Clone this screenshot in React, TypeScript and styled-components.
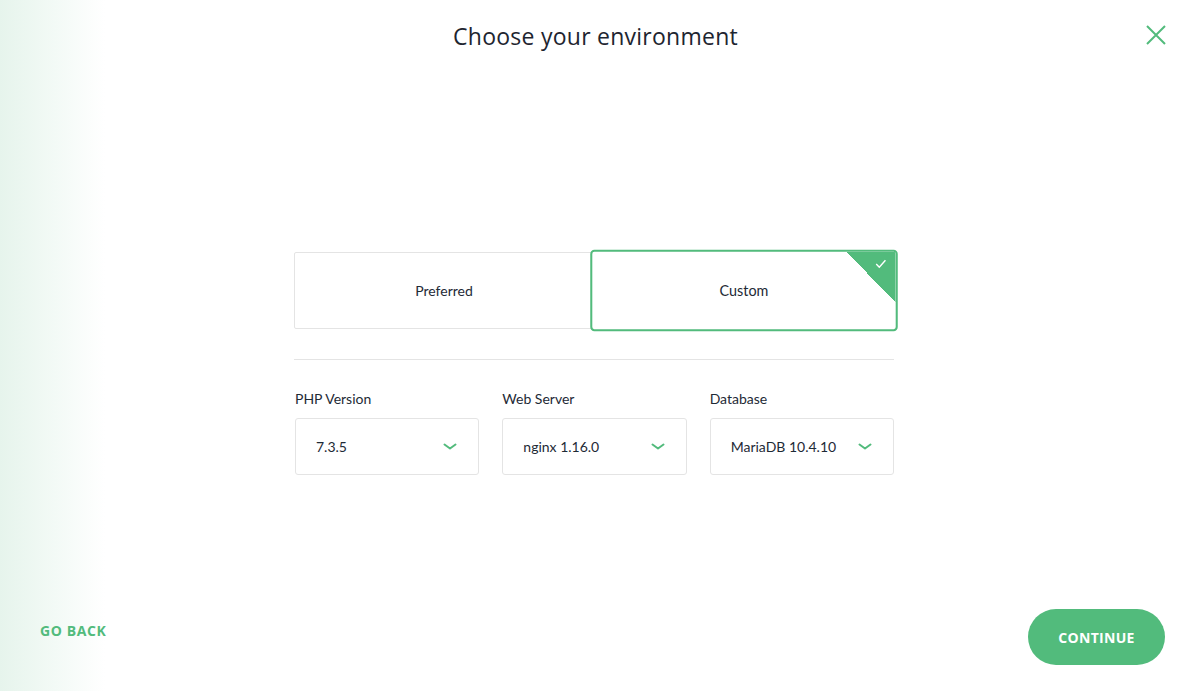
import React, { useState } from "react";
import styled, { createGlobalStyle } from "styled-components";

const GREEN = "#52bb7c";

const Global = createGlobalStyle`
  html, body { margin: 0; padding: 0; height: 100%; }
  body { font-family: Lato, "Open Sans", sans-serif; color: #1e2a36; background: #fff; }
  #root { height: 100%; }
  * { box-sizing: border-box; }
`;

const Page = styled.div`
  position: relative;
  height: 691px;
  display: grid;
  grid-template-rows: auto 1fr auto;
  background: linear-gradient(to right, #e6f4ec 0px, #f3faf6 55px, #ffffff 105px);
`;

const Header = styled.header`
  height: 72px;
  display: flex;
  align-items: center;
  justify-content: center;
  padding-left: 0;
`;

const Title = styled.h1`
  margin: 0;
  font-family: "Open Sans", sans-serif;
  font-weight: 400;
  font-size: 23px;
  letter-spacing: 0.25px;
  color: #1e2530;
`;

const CloseButton = styled.button`
  position: absolute;
  top: 24px;
  right: 24px;
  width: 22px;
  height: 22px;
  padding: 0;
  border: 0;
  background: none;
  cursor: pointer;
  display: flex;
`;

const Main = styled.main`
  padding-top: 180px;
  padding-right: 3px;
  display: flex;
  justify-content: center;
`;

const Content = styled.div`
  width: 600px;
  display: flex;
  flex-direction: column;
`;

const Cards = styled.div`
  display: grid;
  grid-template-columns: 1fr 1fr;
`;

const Card = styled.button<{ $selected?: boolean }>`
  position: relative;
  height: 77px;
  background: #fff;
  border: ${(p) => (p.$selected ? `2px solid ${GREEN}` : "1px solid #e4e4e4")};
  border-radius: ${(p) => (p.$selected ? "4px" : "2px 0 0 2px")};
  font-family: Lato, sans-serif;
  font-size: 14px;
  color: #1e2a36;
  cursor: pointer;
  overflow: hidden;
  transform: ${(p) => (p.$selected ? "scale(1.025, 1.06)" : "none")};
  z-index: ${(p) => (p.$selected ? 1 : 0)};
`;

const Corner = styled.span`
  position: absolute;
  top: 0;
  right: 0;
  width: 48px;
  height: 48px;
  background: linear-gradient(to bottom left, ${GREEN} 50%, transparent 50%);
  display: flex;
  justify-content: flex-end;
  padding: 7px 9px 0 0;
`;

const Divider = styled.hr`
  margin: 30px 0 0;
  border: 0;
  border-top: 1px solid #e4e4e4;
`;

const Fields = styled.div`
  margin-top: 30px;
  padding-left: 1px;
  display: grid;
  grid-template-columns: repeat(3, 1fr);
  column-gap: 23px;
`;

const Field = styled.div`
  display: flex;
  flex-direction: column;
`;

const Label = styled.label`
  font-size: 14px;
  color: #1e2a36;
  line-height: 17px;
  margin-bottom: 11px;
`;

const Select = styled.div`
  height: 57px;
  border: 1px solid #e4e4e4;
  border-radius: 3px;
  display: flex;
  align-items: center;
  justify-content: space-between;
  padding: 0 21px 0 20px;
  font-size: 14px;
  color: #1e2a36;
  background: #fff;
`;

const Footer = styled.footer`
  display: flex;
  justify-content: space-between;
  align-items: center;
  padding: 0 26px 26px 40px;
`;

const BackLink = styled.button`
  border: 0;
  background: none;
  padding: 0;
  margin-bottom: 14px;
  font-family: "Open Sans", sans-serif;
  font-weight: 700;
  font-size: 14px;
  letter-spacing: 0.6px;
  color: ${GREEN};
  cursor: pointer;
`;

const PrimaryButton = styled.button`
  width: 137px;
  height: 56px;
  border: 0;
  border-radius: 28px;
  background: ${GREEN};
  color: #fff;
  font-family: "Open Sans", sans-serif;
  font-weight: 700;
  font-size: 14px;
  letter-spacing: 0.3px;
  cursor: pointer;
`;

const Chevron = () => (
  <svg width="14" height="8" viewBox="0 0 14 8">
    <polyline points="1.5,1.5 7,5.5 12.5,1.5" fill="none" stroke={GREEN} strokeWidth="2" strokeLinecap="round" strokeLinejoin="round" />
  </svg>
);

const Check = () => (
  <svg width="11" height="9" viewBox="0 0 11 9">
    <polyline points="1,4.5 4,7.5 10,1" fill="none" stroke="#fff" strokeWidth="1.4" />
  </svg>
);

const fields = [
  { label: "PHP Version", value: "7.3.5" },
  { label: "Web Server", value: "nginx 1.16.0" },
  { label: "Database", value: "MariaDB 10.4.10" },
];

export default function App() {
  const [choice, setChoice] = useState("custom");
  return (
    <>
      <Global />
      <Page>
        <Header>
          <Title>Choose your environment</Title>
        </Header>
        <CloseButton aria-label="Close">
          <svg width="22" height="22" viewBox="0 0 22 22">
            <path d="M2 2 L20 20 M20 2 L2 20" stroke={GREEN} strokeWidth="2" />
          </svg>
        </CloseButton>
        <Main>
          <Content>
            <Cards>
              <Card $selected={choice === "preferred"} onClick={() => setChoice("preferred")}>
                {choice === "preferred" && <Corner><Check /></Corner>}
                Preferred
              </Card>
              <Card $selected={choice === "custom"} onClick={() => setChoice("custom")}>
                {choice === "custom" && <Corner><Check /></Corner>}
                Custom
              </Card>
            </Cards>
            <Divider />
            <Fields>
              {fields.map((f) => (
                <Field key={f.label}>
                  <Label>{f.label}</Label>
                  <Select>
                    <span>{f.value}</span>
                    <Chevron />
                  </Select>
                </Field>
              ))}
            </Fields>
          </Content>
        </Main>
        <Footer>
          <BackLink>GO BACK</BackLink>
          <PrimaryButton>CONTINUE</PrimaryButton>
        </Footer>
      </Page>
    </>
  );
}
